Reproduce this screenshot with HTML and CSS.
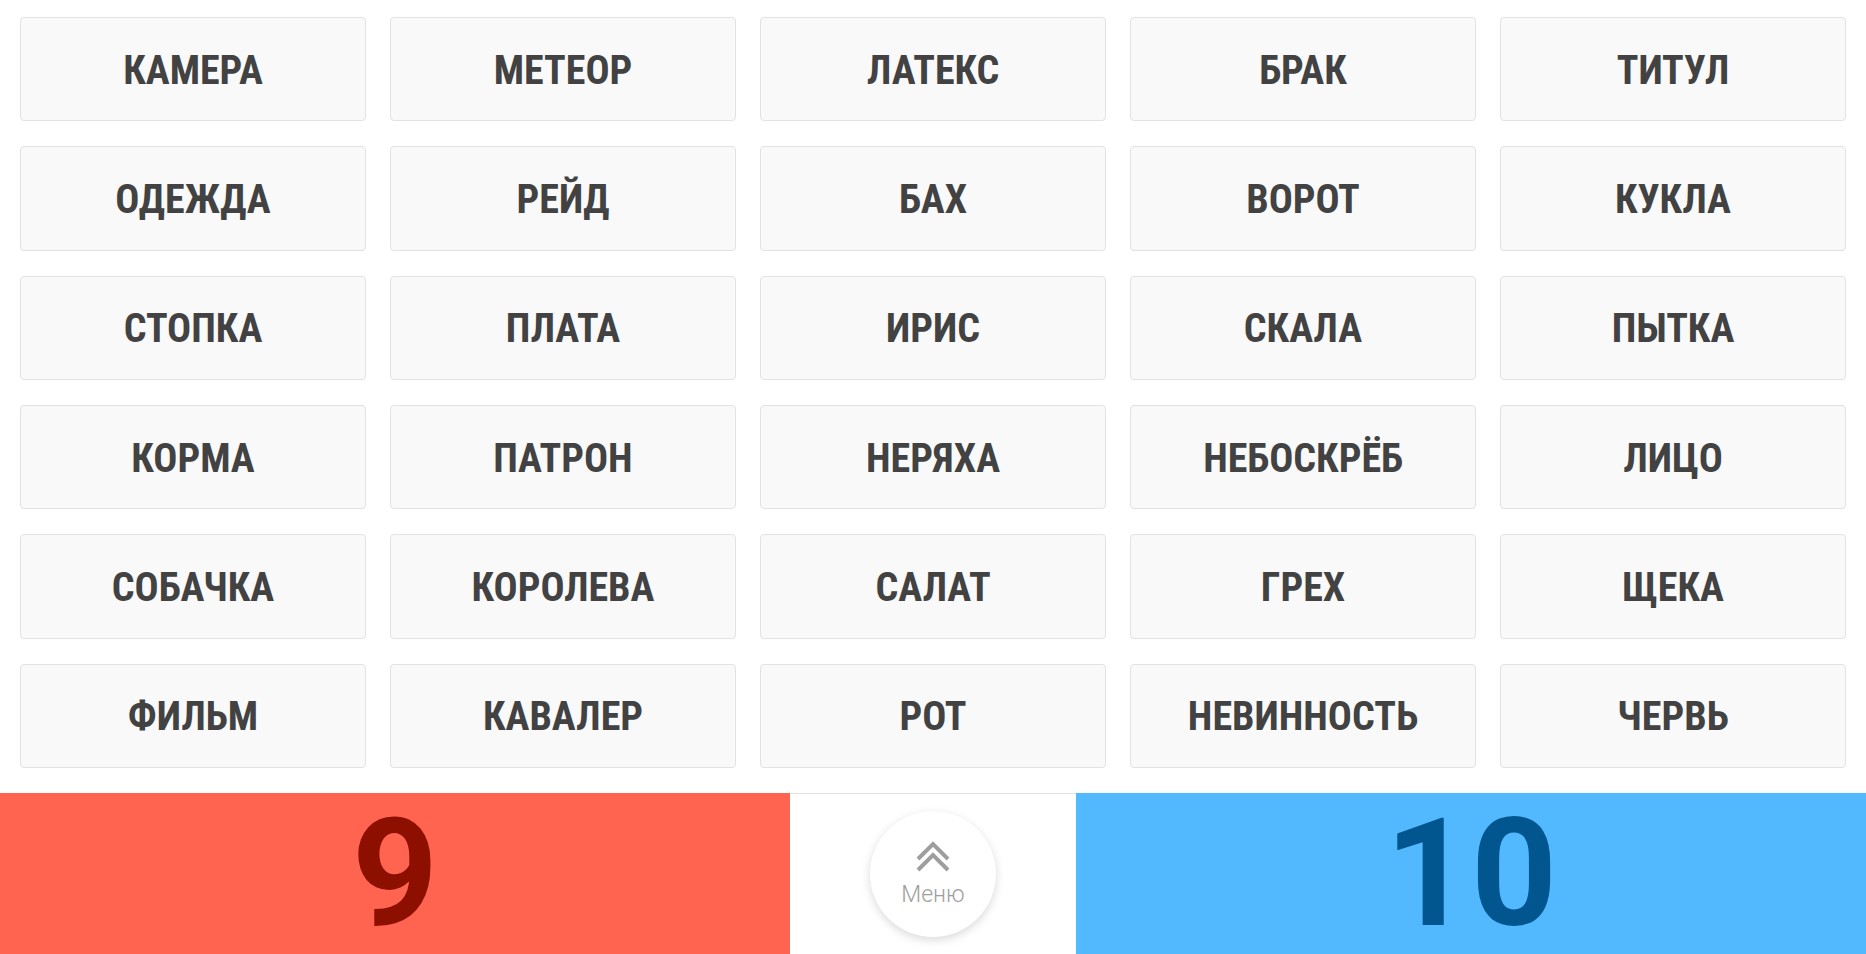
FILE: index.html
```html
<!DOCTYPE html>
<html lang="ru">
<head>
    <meta charset="UTF-8">
    <meta name="viewport" content="width=device-width, initial-scale=1.0">
    <title>Слова</title>
    <link rel="stylesheet" href="styles.css">
</head>
<body>
    <div class="board">
        <div class="card">КАМЕРА</div>
        <div class="card">МЕТЕОР</div>
        <div class="card">ЛАТЕКС</div>
        <div class="card">БРАК</div>
        <div class="card">ТИТУЛ</div>
        <div class="card">ОДЕЖДА</div>
        <div class="card">РЕЙД</div>
        <div class="card">БАХ</div>
        <div class="card">ВОРОТ</div>
        <div class="card">КУКЛА</div>
        <div class="card">СТОПКА</div>
        <div class="card">ПЛАТА</div>
        <div class="card">ИРИС</div>
        <div class="card">СКАЛА</div>
        <div class="card">ПЫТКА</div>
        <div class="card">КОРМА</div>
        <div class="card">ПАТРОН</div>
        <div class="card">НЕРЯХА</div>
        <div class="card">НЕБОСКРЁБ</div>
        <div class="card">ЛИЦО</div>
        <div class="card">СОБАЧКА</div>
        <div class="card">КОРОЛЕВА</div>
        <div class="card">САЛАТ</div>
        <div class="card">ГРЕХ</div>
        <div class="card">ЩЕКА</div>
        <div class="card">ФИЛЬМ</div>
        <div class="card">КАВАЛЕР</div>
        <div class="card">РОТ</div>
        <div class="card">НЕВИННОСТЬ</div>
        <div class="card">ЧЕРВЬ</div>
    </div>
    <div class="scorebar">
        <div class="score score-red">9</div>
        <div class="menu-area">
            <button class="menu-btn">
                <svg width="34" height="32" viewBox="0 0 34 32">
                    <path d="M2 18 L17 3 L32 18" fill="none" stroke="#9e9e9e" stroke-width="4"/>
                    <path d="M2 29 L17 14 L32 29" fill="none" stroke="#9e9e9e" stroke-width="4"/>
                </svg>
                <span>Меню</span>
            </button>
        </div>
        <div class="score score-blue">10</div>
    </div>
</body>
</html>
```

FILE: styles.css
```css
body {
    margin: 0;
    padding: 0;
    font-family: Roboto, "Liberation Sans", sans-serif;
    background-color: #fff;
    height: 100vh;
    display: flex;
    flex-direction: column;
    overflow: hidden;
}

.board {
    flex: 1;
    display: grid;
    grid-template-columns: repeat(5, 1fr);
    grid-template-rows: repeat(6, 1fr);
    gap: 25px 24px;
    padding: 17px 20px 25px 20px;
}

.card {
    display: flex;
    justify-content: center;
    align-items: center;
    background-color: #f9f9f9;
    border: 1px solid #e2e2e2;
    border-radius: 4px;
    color: #424242;
    font-family: "Roboto Condensed", Roboto, sans-serif;
    font-stretch: condensed;
    font-weight: 700;
    font-size: 40px;
    padding-top: 2px;
}

.scorebar {
    height: 161px;
    display: flex;
}

.score {
    flex: 1;
    display: flex;
    justify-content: center;
    align-items: center;
    font-weight: 700;
    font-size: 150px;
    line-height: 1;
}

.score-red {
    background-color: #ff6450;
    color: #8c0f00;
}

.score-blue {
    background-color: #52b9ff;
    color: #02568f;
}

.menu-area {
    width: 286px;
    display: flex;
    justify-content: center;
    align-items: center;
    background-color: #fff;
    border-top: 1px solid #e4e4e4;
}

.menu-btn {
    width: 126px;
    height: 126px;
    border-radius: 50%;
    border: none;
    background-color: #fff;
    box-shadow: 0 3px 10px rgba(0, 0, 0, 0.15);
    display: flex;
    flex-direction: column;
    align-items: center;
    justify-content: center;
    padding: 0;
    cursor: pointer;
}

.menu-btn span {
    font-family: Roboto, sans-serif;
    font-weight: 300;
    font-size: 23px;
    color: #9e9e9e;
    margin-top: 8px;
}
```
